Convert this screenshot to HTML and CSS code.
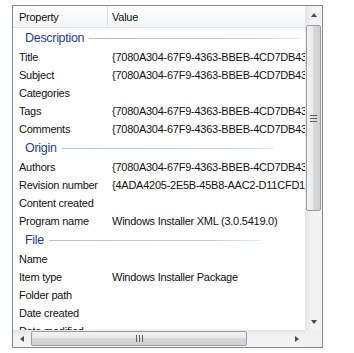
FILE: index.html
```html
<!DOCTYPE html>
<html>
<head>
<meta charset="utf-8">
<link rel="stylesheet" href="styles.css">
</head>
<body>
<div class="panel">
  <div class="view">
    <div class="header">
      <div class="hcell prop">Property</div>
      <div class="hcell val">Value</div>
    </div>
    <div class="group"><span class="gtitle">Description</span><span class="gline"></span></div>
    <div class="row"><span class="p">Title</span><span class="v">{7080A304-67F9-4363-BBEB-4CD7DB43E1A2}</span></div>
    <div class="row"><span class="p">Subject</span><span class="v">{7080A304-67F9-4363-BBEB-4CD7DB43E1A2}</span></div>
    <div class="row"><span class="p">Categories</span><span class="v"></span></div>
    <div class="row"><span class="p">Tags</span><span class="v">{7080A304-67F9-4363-BBEB-4CD7DB43E1A2}</span></div>
    <div class="row"><span class="p">Comments</span><span class="v">{7080A304-67F9-4363-BBEB-4CD7DB43E1A2}</span></div>
    <div class="group"><span class="gtitle">Origin</span><span class="gline"></span></div>
    <div class="row"><span class="p">Authors</span><span class="v">{7080A304-67F9-4363-BBEB-4CD7DB43E1A2}</span></div>
    <div class="row"><span class="p">Revision number</span><span class="v">{4ADA4205-2E5B-45B8-AAC2-D11CFD1E2C4A}</span></div>
    <div class="row"><span class="p">Content created</span><span class="v"></span></div>
    <div class="row"><span class="p">Program name</span><span class="v">Windows Installer XML (3.0.5419.0)</span></div>
    <div class="group"><span class="gtitle">File</span><span class="gline"></span></div>
    <div class="row"><span class="p">Name</span><span class="v"></span></div>
    <div class="row"><span class="p">Item type</span><span class="v">Windows Installer Package</span></div>
    <div class="row"><span class="p">Folder path</span><span class="v"></span></div>
    <div class="row"><span class="p">Date created</span><span class="v"></span></div>
    <div class="row"><span class="p">Date modified</span><span class="v"></span></div>
  </div>
  <div class="vscroll">
    <div class="sbtn"><span class="tri up"></span></div>
    <div class="vtrack">
      <div class="vthumb"><span class="grip-h"></span></div>
    </div>
    <div class="sbtn"><span class="tri down"></span></div>
  </div>
  <div class="hscroll">
    <div class="sbtn"><span class="tri left"></span></div>
    <div class="htrack">
      <div class="hthumb"><span class="grip-v"></span></div>
    </div>
    <div class="sbtn"><span class="tri right"></span></div>
  </div>
  <div class="corner"></div>
</div>
</body>
</html>
```

FILE: styles.css
```css
html, body {
  margin: 0;
  background: #ffffff;
}
body {
  padding: 5px 0 0 12px;
  font-family: "Liberation Sans", Arial, sans-serif;
  font-size: 11px;
  letter-spacing: -0.25px;
  color: #111;
}
.panel {
  width: 311px;
  height: 343px;
  box-sizing: border-box;
  border: 1px solid #828790;
  display: grid;
  grid-template-columns: 292px 17px;
  grid-template-rows: 324px 17px;
  overflow: hidden;
}
.view {
  overflow: hidden;
  background: #fff;
}
.header {
  display: flex;
  height: 21px;
  border-bottom: 1px solid #dfe3e8;
  background: linear-gradient(#ffffff, #f3f4f6);
}
.hcell {
  display: flex;
  align-items: center;
  box-sizing: border-box;
  padding-top: 1px;
}
.hcell.prop {
  width: 95px;
  padding-left: 6px;
  border-right: 1px solid #dde1e6;
}
.hcell.val {
  flex: 1;
  padding-left: 4px;
}
.group {
  height: 20px;
  display: flex;
  align-items: center;
  padding-left: 12px;
  box-sizing: border-box;
}
.gtitle {
  color: #1e3d9c;
  font-size: 12.5px;
  letter-spacing: -0.3px;
}
.gline {
  flex: 0 0 auto;
  width: 212px;
  height: 1px;
  margin-left: 5px;
  background: linear-gradient(to right, #b4c2dd 0%, #c6d1e6 80%, #e8ecf4 100%);
}
.row {
  display: flex;
  height: 18px;
  align-items: center;
  white-space: nowrap;
}
.p {
  width: 95px;
  flex: 0 0 95px;
  padding-left: 6px;
  box-sizing: border-box;
}
.v {
  padding-left: 4px;
}
.vscroll {
  display: flex;
  flex-direction: column;
  background: linear-gradient(to right, #e5e5e5, #f2f2f2 40%, #f4f4f4);
}
.hscroll {
  display: flex;
  background: linear-gradient(#e5e5e5, #f2f2f2 40%, #f4f4f4);
}
.sbtn {
  flex: 0 0 17px;
  width: 17px;
  height: 17px;
  display: flex;
  align-items: center;
  justify-content: center;
}
.vtrack {
  flex: 1;
  padding: 2px 1px 0 1px;
}
.vthumb {
  height: 186px;
  box-sizing: border-box;
  border: 1px solid #9a9ea5;
  border-radius: 2px;
  background: linear-gradient(to right, #f2f2f2, #ebebeb 45%, #d9d9d9 50%, #cfcfcf);
  display: flex;
  align-items: center;
  justify-content: center;
}
.htrack {
  flex: 1;
  padding: 1px 0 1px 1px;
  display: flex;
}
.hthumb {
  width: 216px;
  box-sizing: border-box;
  border: 1px solid #9a9ea5;
  border-radius: 2px;
  background: linear-gradient(#f2f2f2, #ebebeb 45%, #d9d9d9 50%, #cfcfcf);
  display: flex;
  align-items: center;
  justify-content: center;
}
.grip-h {
  width: 7px;
  height: 7px;
  background: repeating-linear-gradient(#5e5e5e 0 1px, transparent 1px 3px);
}
.grip-v {
  width: 7px;
  height: 7px;
  background: repeating-linear-gradient(to right, #5e5e5e 0 1px, transparent 1px 3px);
}
.tri {
  width: 0;
  height: 0;
  border-style: solid;
}
.tri.up {
  border-width: 0 3.5px 4px 3.5px;
  border-color: transparent transparent #4a4a4a transparent;
}
.tri.down {
  border-width: 4px 3.5px 0 3.5px;
  border-color: #4a4a4a transparent transparent transparent;
}
.tri.left {
  border-width: 3.5px 4px 3.5px 0;
  border-color: transparent #4a4a4a transparent transparent;
}
.tri.right {
  border-width: 3.5px 0 3.5px 4px;
  border-color: transparent transparent transparent #4a4a4a;
}
.corner {
  background: #f0f0f0;
}
```
